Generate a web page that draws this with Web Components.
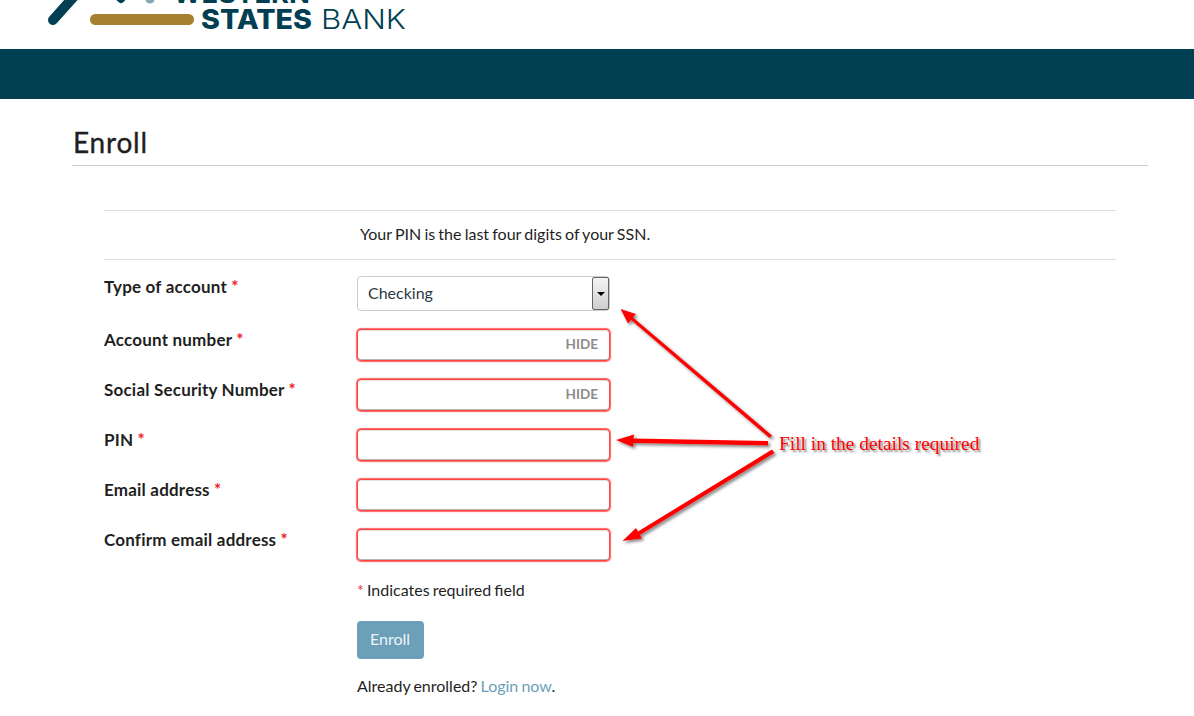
<!DOCTYPE html>
<html lang="en">
<head>
<meta charset="utf-8">
<title>Enroll</title>
<style>
  html, body { margin: 0; padding: 0; background: #fff; }
  body { font-family: Lato, "Liberation Sans", sans-serif; color: #1f1f1f; height: 716px; overflow: hidden; position: relative; }
</style>
</head>
<body>
<bank-header></bank-header>
<enroll-page>
  <form-row label="Type of account" kind="select"></form-row>
  <form-row label="Account number" kind="hide"></form-row>
  <form-row label="Social Security Number" kind="hide"></form-row>
  <form-row label="PIN"></form-row>
  <form-row label="Email address"></form-row>
  <form-row label="Confirm email address"></form-row>
</enroll-page>
<note-arrows></note-arrows>

<script>
// Logo + navy band
class BankHeader extends HTMLElement {
    constructor() {
        super();
        this.attachShadow({ mode: 'open' });
        this.shadowRoot.innerHTML = `
            <style>
                :host { display: block; }
                .top { height: 49px; overflow: hidden; }
                svg { display: block; }
                .band { height: 50px; background: #013f52; }
                text { font-family: Inter, Lato, "Liberation Sans", sans-serif; fill: #023f52; }
            </style>
            <div class="top">
                <svg width="450" height="49" viewBox="0 0 450 49">
                    <path d="M53 20 L78 -8" stroke="#023f52" stroke-width="10" stroke-linecap="round" fill="none"/>
                    <path d="M116 -6 L121 -1" stroke="#023f52" stroke-width="8" stroke-linecap="round" fill="none"/>
                    <circle cx="150" cy="-1" r="4.5" fill="#8ba6b3"/>
                    <rect x="90" y="14" width="104" height="11" rx="5.5" fill="#a67f2f"/>
                    <text x="173" y="2.5" font-size="26" font-weight="700" textLength="137" lengthAdjust="spacingAndGlyphs">WESTERN</text>
                    <text x="201" y="28.5" font-size="27" font-weight="800" textLength="111" lengthAdjust="spacingAndGlyphs">STATES</text>
                    <text x="321" y="28.5" font-size="27" font-weight="300" textLength="85" lengthAdjust="spacingAndGlyphs">BANK</text>
                </svg>
            </div>
            <div class="band"></div>
        `;
    }
}
customElements.define('bank-header', BankHeader);

// Page body, heading and intro / footer parts of the form
class EnrollPage extends HTMLElement {
    constructor() {
        super();
        this.attachShadow({ mode: 'open' });
        this.shadowRoot.innerHTML = `
            <style>
                :host { display: block; padding: 0 46px 0 72px; font-size: 16px; line-height: 22px; }
                h1 { margin: 0; padding: 26px 0 6px 1px; height: 34px; line-height: 34px; font-size: 28px; font-weight: 400; color: #1f1f1f; border-bottom: 1px solid #ccc; letter-spacing: .8px; -webkit-text-stroke: .35px #1f1f1f; }
                .form { margin: 44px 32px 0; }
                .intro { border-top: 1px solid #ddd; border-bottom: 1px solid #ddd; height: 46px; padding: 0 0 2px 256px; display: flex; align-items: center; word-spacing: -.9px; }
                .rows { padding-top: 16px; display: flex; flex-direction: column; }
                .foot { margin-left: 253px; word-spacing: -1px; }
                .req { margin-top: 1px; }
                .req b { color: #e33; font-weight: 400; }
                button { display: block; margin-top: 20px; width: 67px; height: 38px; border: 0; border-radius: 4px; background: #6ca0b9; color: #eef4f7; font: 16px Lato, sans-serif; padding: 0 1px 4px 0; }
                .login { margin-top: 16px; }
                a { color: #6ca0b9; text-decoration: none; }
            </style>
            <h1>Enroll</h1>
            <div class="form">
                <div class="intro">Your PIN is the last four digits of your SSN.</div>
                <div class="rows"><slot></slot></div>
                <div class="foot">
                    <div class="req"><b>*</b> Indicates required field</div>
                    <button type="button">Enroll</button>
                    <div class="login">Already enrolled? <a href="#">Login now</a>.</div>
                </div>
            </div>
        `;
    }
}
customElements.define('enroll-page', EnrollPage);

// One label + field row
class FormRow extends HTMLElement {
    constructor() {
        super();
        this.attachShadow({ mode: 'open' });
    }
    connectedCallback() {
        const kind = this.getAttribute('kind');
        let field = `<input type="text">`;
        if (kind === 'hide') field = `<input type="text"><span class="hide">HIDE</span>`;
        if (kind === 'select') field = `<div class="select">Checking<span class="arrow"><i></i></span></div>`;
        this.shadowRoot.innerHTML = `
            <style>
                :host { display: grid; grid-template-columns: 252px 255px; height: 50px; font-size: 16px; }
                :host([kind="select"]) { height: 52px; }
                :host([kind="select"]) label { padding-top: 0; }
                label { font-size: 17px; font-weight: 700; letter-spacing: .2px; line-height: 22px; padding-top: 1px; color: #1f1f1f; }
                label b { color: #e22; font-weight: 700; }
                .field { position: relative; height: 34px; }
                input { box-sizing: border-box; display: block; width: 253px; height: 32px; margin: 1px; padding: 0 10px; border: 1px solid #f44; border-radius: 4px; outline: 0; background: #fff; box-shadow: 0 0 1px 1px rgba(255,60,60,.8), inset 0 -1px 0 #b5b5b5, inset 0 1px 0 #e2e2e2; }
                .hide { position: absolute; right: 13px; top: 7px; font-size: 13.5px; line-height: 18px; font-weight: 700; color: #8c8c8c; }
                .select { box-sizing: border-box; position: relative; margin-left: 1px; width: 253px; height: 35px; border: 1px solid #ccc; border-radius: 4px; padding: 0 10px 2px; line-height: 31px; color: #2c3a44; }
                .arrow { position: absolute; right: 0; top: 0; bottom: 0; width: 17px; box-sizing: border-box; border: 1px solid #666; border-radius: 2px; background: linear-gradient(#f4f4f4, #cfcfcf); display: flex; align-items: center; justify-content: center; }
                .arrow i { width: 0; height: 0; border: 4px solid transparent; border-top-color: #000; border-bottom: 0; }
            </style>
            <label>${this.getAttribute('label')} <b>*</b></label>
            <div class="field">${field}</div>
        `;
    }
}
customElements.define('form-row', FormRow);

// Red annotation laid over the screenshot
class NoteArrows extends HTMLElement {
    constructor() {
        super();
        this.attachShadow({ mode: 'open' });
        this.shadowRoot.innerHTML = `
            <style>
                :host { display: block; position: absolute; left: 0; top: 0; width: 1194px; height: 716px; pointer-events: none; }
                svg { position: absolute; left: 0; top: 0; }
                .note { position: absolute; left: 779px; top: 434px; font: 19.4px/20px "Liberation Serif", serif; color: #f00; text-shadow: 2px 2px 2px #888; white-space: nowrap; }
            </style>
            <svg width="1194" height="716" viewBox="0 0 1194 716">
                <defs>
                    <filter id="sh" x="-20%" y="-20%" width="140%" height="140%">
                        <feDropShadow dx="2" dy="2" stdDeviation="1.5" flood-color="#555" flood-opacity=".7"/>
                    </filter>
                </defs>
                <g filter="url(#sh)" fill="#f00" stroke="none">
                    <path d="M772 435.5 L633 317.5 L636 314 L620.5 309 L628 323.5 L631 320 L769.5 438 Z"/>
                    <path d="M616 440 L634 434.5 L633.5 438.5 L768 441 L768 445.5 L633.5 443 L633 447 Z"/>
                    <path d="M622.5 541 L636 528 L638 531.5 L772 449.5 L774.5 453 L640 535 L642 538.5 Z"/>
                </g>
            </svg>
            <div class="note">Fill in the details required</div>
        `;
    }
}
customElements.define('note-arrows', NoteArrows);
</script>
</body>
</html>
